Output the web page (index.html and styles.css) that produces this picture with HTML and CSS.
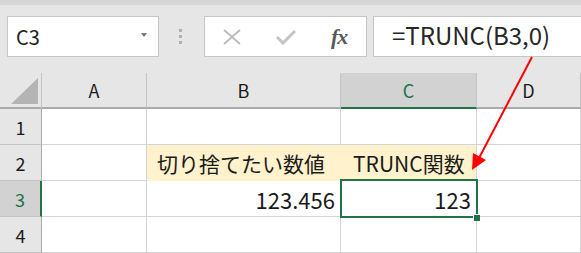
FILE: index.html
```html
<!DOCTYPE html>
<html>
<head>
    <title>TRUNC関数</title>
    <link rel="stylesheet" href="styles.css">
</head>
<body>
    <div class="window">
        <div class="top-strip"></div>

        <div class="toolbar">
            <div class="name-box">
                <span class="name-text">C3</span>
                <span class="dropdown"></span>
            </div>
            <div class="grip"><i></i><i></i><i></i></div>
            <div class="fx-box">
                <span class="fx-btn">
                    <svg width="18" height="16" viewBox="0 0 18 16">
                        <path d="M1 1 L17 15 M17 1 L1 15" stroke="#bdbdbd" stroke-width="2" fill="none"/>
                    </svg>
                </span>
                <span class="fx-btn">
                    <svg width="20" height="16" viewBox="0 0 20 16">
                        <path d="M1 8 L7 14 L19 2" stroke="#c4c4c4" stroke-width="3" fill="none"/>
                    </svg>
                </span>
                <span class="fx-btn fx-label">fx</span>
            </div>
            <div class="formula">=TRUNC(B3,0)</div>
        </div>

        <div class="sheet">
            <!-- header row -->
            <div class="corner"><span class="corner-tri"></span></div>
            <div class="col-head">A</div>
            <div class="col-head">B</div>
            <div class="col-head active">C</div>
            <div class="col-head">D</div>

            <!-- row 1 -->
            <div class="row-head">1</div>
            <div class="cell"></div>
            <div class="cell"></div>
            <div class="cell"></div>
            <div class="cell"></div>

            <!-- row 2 -->
            <div class="row-head">2</div>
            <div class="cell"></div>
            <div class="cell label label-b">切り捨てたい数値</div>
            <div class="cell label label-c">TRUNC関数</div>
            <div class="cell"></div>

            <!-- row 3 -->
            <div class="row-head active">3</div>
            <div class="cell"></div>
            <div class="cell num">123.456</div>
            <div class="cell num selected">123<span class="sel-frame"></span><span class="sel-handle"></span></div>
            <div class="cell"></div>

            <!-- row 4 -->
            <div class="row-head">4</div>
            <div class="cell"></div>
            <div class="cell"></div>
            <div class="cell"></div>
            <div class="cell"></div>
        </div>

        <svg class="arrow" width="581" height="253" viewBox="0 0 581 253">
            <line x1="532" y1="57" x2="478" y2="160" stroke="#ff0000" stroke-width="2"/>
            <polygon points="472,170 473,153 486,160" fill="#ff0000"/>
        </svg>
    </div>
</body>
</html>
```

FILE: styles.css
```css
:root {
    --chrome: #e6e6e6;
    --grid: #d4d4d4;
    --head-line: #c4c4c4;
    --green: #217346;
    --selected-head: #d2d2d2;
    --note: #fff2cc;
}
body {
    margin: 0;
    font-family: "Noto Sans CJK JP", "Noto Sans", sans-serif;
    color: #1a1a1a;
    background: var(--chrome);
}
.window {
    position: relative;
    width: 581px;
    height: 253px;
    overflow: hidden;
    background: var(--chrome);
}
.top-strip {
    height: 5px;
    background: #d6d6d6;
}
.toolbar {
    display: flex;
    align-items: center;
    height: 41px;
    padding: 11px 0 0 7px;
    margin-bottom: 16px;
}
.name-box {
    display: flex;
    align-items: center;
    box-sizing: border-box;
    width: 152px;
    height: 41px;
    padding: 0 11px 0 8px;
    background: #fff;
    border: 1px solid #c6c6c6;
}
.name-text {
    font-size: 20px;
    color: #262626;
    line-height: 1;
}
.dropdown {
    margin-left: auto;
    margin-top: -3px;
    width: 0;
    height: 0;
    border-left: 3px solid transparent;
    border-right: 3px solid transparent;
    border-top: 4px solid #777;
}
.grip {
    display: flex;
    flex-direction: column;
    gap: 3px;
    margin: -1px 22px 0 20px;
}
.grip i {
    display: block;
    width: 3px;
    height: 3px;
    background: #b0b0b0;
}
.fx-box {
    display: flex;
    align-items: center;
    box-sizing: border-box;
    width: 163px;
    height: 41px;
    background: #fff;
    border: 1px solid #c6c6c6;
}
.fx-btn {
    display: flex;
    align-items: center;
    justify-content: center;
    width: 54px;
}
.fx-label {
    font-family: "Liberation Serif", "DejaVu Serif", serif;
    font-style: italic;
    font-weight: bold;
    font-size: 22px;
    color: #5a5a5a;
    letter-spacing: -1px;
}
.formula {
    flex: 1;
    box-sizing: border-box;
    height: 41px;
    margin: 0 -10px 0 6px;
    padding: 0 0 4px 18px;
    display: flex;
    align-items: center;
    background: #fff;
    border: 1px solid #c6c6c6;
    font-size: 24px;
    color: #262626;
}
.sheet {
    display: grid;
    grid-template-columns: 42px 105px 194px 136px 1fr;
    grid-template-rows: repeat(5, 36px);
}
.sheet > div {
    box-sizing: border-box;
    display: flex;
    align-items: center;
}
.corner {
    justify-content: flex-end;
    align-items: flex-end !important;
    padding: 0 3px 3px 0;
    background: var(--chrome);
    border-right: 1px solid var(--head-line);
    border-bottom: 2px solid #ababab;
}
.corner-tri {
    width: 0;
    height: 0;
    border-left: 27px solid transparent;
    border-bottom: 26px solid #b4b4b4;
}
.col-head {
    justify-content: center;
    background: var(--chrome);
    border-right: 1px solid var(--head-line);
    border-bottom: 2px solid #ababab;
    font-size: 18px;
}
.col-head.active {
    background: var(--selected-head);
    border-bottom-color: var(--green);
    color: var(--green);
}
.row-head {
    justify-content: center;
    background: var(--chrome);
    border-right: 1px solid #ababab;
    border-bottom: 1px solid var(--head-line);
    font-size: 18px;
}
.row-head.active {
    background: var(--selected-head);
    border-right: 2px solid var(--green);
    color: var(--green);
}
.cell {
    position: relative;
    background: #fff;
    border-right: 1px solid var(--grid);
    border-bottom: 1px solid var(--grid);
    font-size: 21px;
}
.label {
    background: var(--note);
    border-bottom-color: var(--note);
    white-space: nowrap;
}
.label-b {
    padding-left: 10px;
    border-right-color: var(--note);
}
.label-c {
    padding-left: 12px;
}
.num {
    justify-content: flex-end;
    padding-right: 5px;
    font-size: 22px;
}
.selected {
    z-index: 1;
}
.sel-frame {
    position: absolute;
    top: -2px;
    left: -1px;
    width: 138px;
    height: 39px;
    box-sizing: border-box;
    border: 2px solid var(--green);
}
.sel-handle {
    position: absolute;
    left: 132px;
    top: 33px;
    width: 6px;
    height: 6px;
    background: var(--green);
    border: 1px solid #fff;
    border-right: none;
    border-bottom: none;
}
.arrow {
    position: absolute;
    top: 0;
    left: 0;
    z-index: 2;
    pointer-events: none;
}
```
